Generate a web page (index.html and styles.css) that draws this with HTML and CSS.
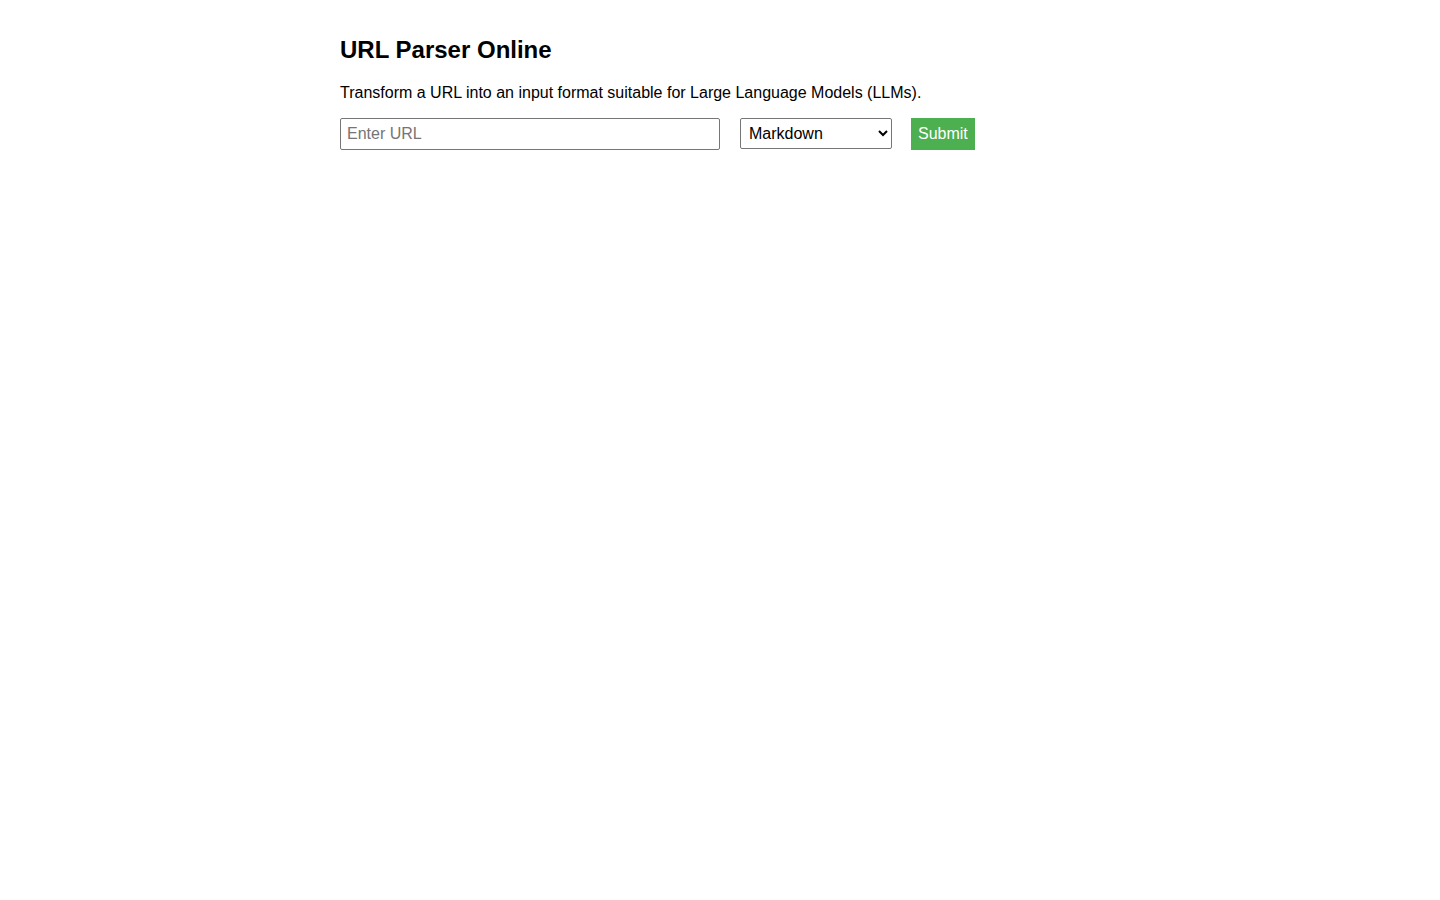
FILE: index.html
```html
<!DOCTYPE html>
<html lang="en">
<head>
<meta charset="utf-8">
<title>URL Parser Online</title>
<link rel="stylesheet" href="styles.css">
</head>
<body>
<main class="container">
  <h1 class="title">URL Parser Online</h1>
  <p class="intro">Transform a URL into an input format suitable for Large Language Models (LLMs).</p>
  <form class="parser-form">
    <input class="url-input" type="text" placeholder="Enter URL">
    <select class="format-select">
      <option>Markdown</option>
      <option>HTML</option>
      <option>Text</option>
    </select>
    <button class="submit-btn" type="button">Submit</button>
  </form>
</main>
</body>
</html>
```

FILE: styles.css
```css
html, body {
  margin: 0;
  padding: 0;
  background: #fff;
}

body {
  font-family: "Liberation Sans", Arial, sans-serif;
  color: #000;
}

.container {
  max-width: 760px;
  margin: 0 auto;
  padding: 20px 0;
}

.title {
  font-size: 24px;
  font-weight: bold;
  margin: 16px 0 0;
  line-height: 28px;
}

.intro {
  font-size: 16px;
  margin: 20px 0 0;
  line-height: 18px;
}

.parser-form {
  display: flex;
  align-items: flex-start;
  margin-top: 16px;
}

.url-input {
  box-sizing: border-box;
  width: 380px;
  height: 32px;
  padding: 0 6px;
  border: 1px solid #767676;
  border-radius: 2px;
  font-family: "Liberation Sans", Arial, sans-serif;
  font-size: 16px;
  margin: 0 20px 0 0;
}

.url-input::placeholder {
  color: #757575;
}

.format-select {
  box-sizing: border-box;
  width: 152px;
  height: 31px;
  padding: 0 4px;
  border: 1px solid #767676;
  border-radius: 2px;
  background: #fff;
  color: #000;
  font-family: "Liberation Sans", Arial, sans-serif;
  font-size: 16px;
  margin: 0 19px 0 0;
}

.submit-btn {
  box-sizing: border-box;
  height: 32px;
  padding: 0 7px;
  border: none;
  background: #4caf50;
  color: #fff;
  font-family: "Liberation Sans", Arial, sans-serif;
  font-size: 16px;
  cursor: pointer;
}
```
